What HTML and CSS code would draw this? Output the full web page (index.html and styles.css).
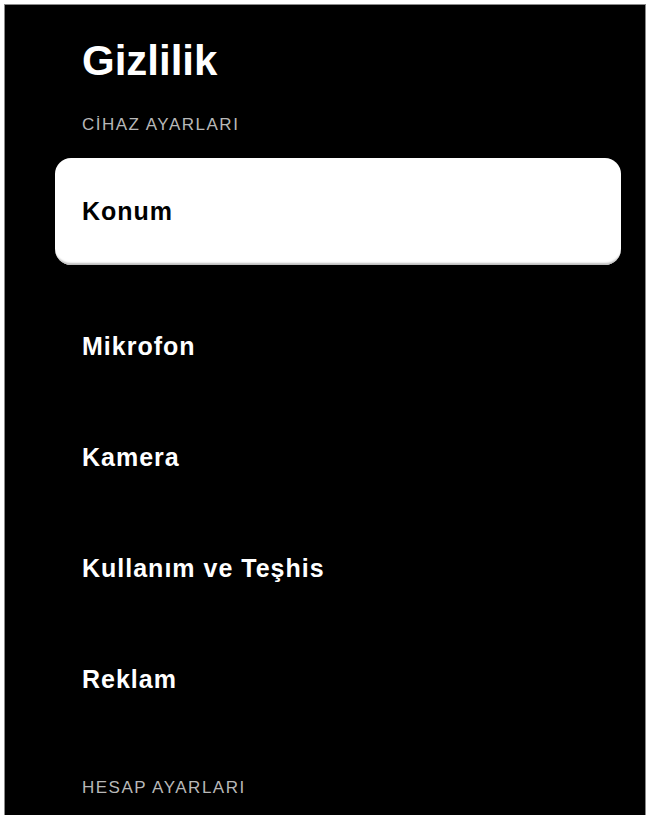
FILE: index.html
```html
<!DOCTYPE html>
<html lang="tr">
<head>
<meta charset="utf-8">
<title>Gizlilik</title>
<link rel="stylesheet" href="styles.css">
</head>
<body>
<div class="frame">
  <h1 class="title">Gizlilik</h1>
  <div class="section">CİHAZ AYARLARI</div>
  <div class="card"><span class="item-label dark">Konum</span></div>
  <ul class="menu">
    <li class="menu-item"><span class="item-label">Mikrofon</span></li>
    <li class="menu-item"><span class="item-label">Kamera</span></li>
    <li class="menu-item"><span class="item-label">Kullanım ve Teşhis</span></li>
    <li class="menu-item"><span class="item-label">Reklam</span></li>
  </ul>
  <div class="section section-bottom">HESAP AYARLARI</div>
</div>
</body>
</html>
```
FILE: styles.css
```css
html, body {
  margin: 0;
  padding: 0;
  background: #ffffff;
  height: 100%;
  overflow: hidden;
}
body {
  font-family: "Liberation Sans", Arial, sans-serif;
}
.frame {
  margin: 4px 0 0 4px;
  width: 642px;
  height: 811px;
  background: #000000;
  border: 1px solid #8a8a8a;
  border-bottom: none;
  padding-left: 77px;
  box-sizing: border-box;
  display: flex;
  flex-direction: column;
}
.title {
  margin: 0;
  padding-top: 32px;
  font-size: 42px;
  line-height: 48px;
  font-weight: bold;
  color: #ffffff;
  letter-spacing: 0;
}
.section {
  margin-top: 30px;
  font-size: 17px;
  line-height: 20px;
  color: #b8b8b8;
  letter-spacing: 1.5px;
}
.card {
  margin: 23px 0 0 -27px;
  width: 566px;
  height: 107px;
  flex-shrink: 0;
  box-sizing: border-box;
  padding-left: 27px;
  background: #ffffff;
  border-radius: 16px;
  box-shadow: inset 0 -4px 2px -2px #bdbdbd;
  display: flex;
  align-items: center;
}
.item-label {
  font-size: 25px;
  font-weight: bold;
  color: #ffffff;
  letter-spacing: 1px;
}
.item-label.dark {
  color: #000000;
}
.menu {
  list-style: none;
  margin: 26px 0 0 0;
  padding: 0;
}
.menu-item {
  height: 111px;
  display: flex;
  align-items: center;
}
.section-bottom {
  margin-top: 43px;
}
```
